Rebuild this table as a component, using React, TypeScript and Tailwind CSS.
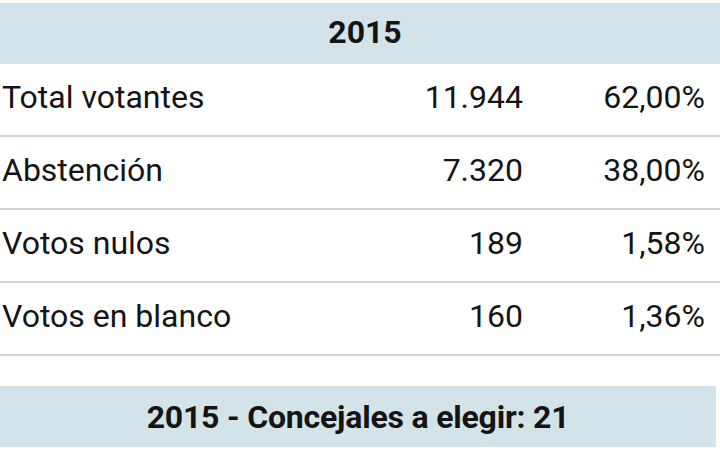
import React from 'react';

const rows = [
  { label: 'Total votantes', value: '11.944', pct: '62,00%' },
  { label: 'Abstención', value: '7.320', pct: '38,00%' },
  { label: 'Votos nulos', value: '189', pct: '1,58%' },
  { label: 'Votos en blanco', value: '160', pct: '1,36%' },
];

const App: React.FC = () => {
  return (
    <div className="w-[720px] h-[450px] bg-white text-[#141414] overflow-hidden" style={{ fontFamily: 'Roboto, "Liberation Sans", sans-serif' }}>
      <div className="mt-[3px] h-[61px] bg-[#d3e3ea] flex items-center justify-center pl-[10px] pb-[4px] text-[32px] font-bold">
        2015
      </div>

      {rows.map((row, i) => (
        <div key={i} className="h-[73px] flex items-center border-b-2 border-[#cdd4de] text-[32px] pr-[15px] pb-[5px]">
          <span className="flex-1 pl-[2px]">{row.label}</span>
          <span className="w-[120px] text-right">{row.value}</span>
          <span className="w-[182px] text-right">{row.pct}</span>
        </div>
      ))}

      <div className="mt-[30px] mr-[4px] h-[61px] bg-[#d3e3ea] flex items-center justify-center text-[32px] font-bold tracking-[-0.2px]">
        2015 - Concejales a elegir: 21
      </div>
    </div>
  );
};

export default App;
